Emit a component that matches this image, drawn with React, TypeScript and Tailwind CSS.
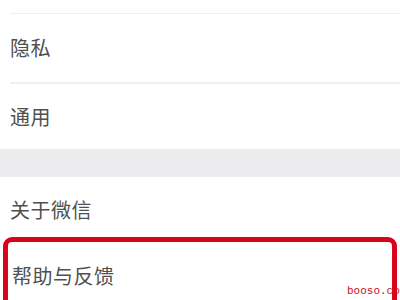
import React from "react";

const font = { fontFamily: '"Noto Sans CJK SC", "Noto Sans", sans-serif' };

function Row({ label, h, cls = "" }: { label: string; h: string; cls?: string }) {
  return (
    <div className={`flex items-center pl-[10px] ${h} ${cls}`}>
      <span className="text-[20px] leading-none text-[#505050] tracking-[0.5px]" style={font}>
        {label}
      </span>
    </div>
  );
}

export default function App() {
  return (
    <div className="relative w-[400px] h-[300px] overflow-hidden bg-white">
      <div className="h-[13px] bg-white" />
      <div className="ml-[10px] h-px bg-[#efefef]" />
      <Row label="隐私" h="h-[68px]" />
      <div className="ml-[10px] h-[2px] bg-[#efefef]" />
      <Row label="通用" h="h-[65px]" />
      <div className="h-[28px] bg-[#ececee]" />
      <Row label="关于微信" h="h-[66px]" />
      <Row label="帮助与反馈" h="h-[60px]" cls="pt-[6px] pl-[12px]" />
      <div className="absolute left-[3px] top-[237px] w-[394px] h-[90px] border-[5px] border-[#d8041c] rounded-[9px]" />
      <div
        className="absolute left-[347px] top-[286px] text-[11px] leading-none text-[#c8101c] whitespace-nowrap"
        style={{ fontFamily: '"Liberation Mono", monospace' }}
      >
        booso.com
      </div>
    </div>
  );
}
